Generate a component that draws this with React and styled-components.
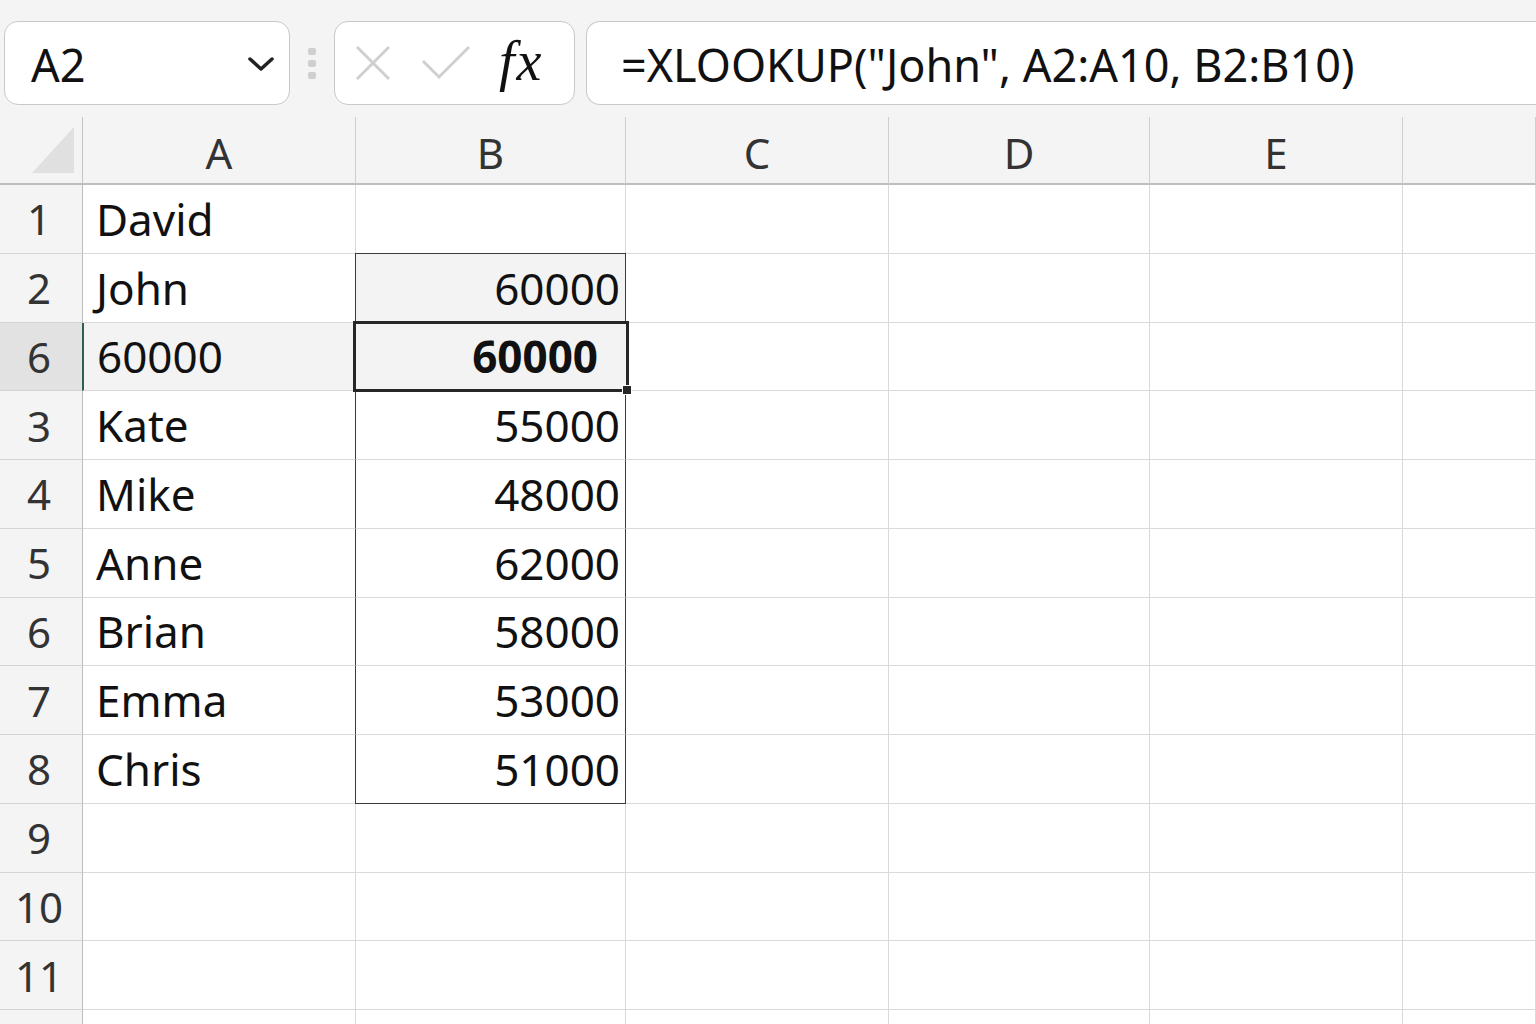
import React from 'react'
import styled, { createGlobalStyle, css } from 'styled-components'

const GlobalStyle = createGlobalStyle`
  html, body {
    margin: 0;
    padding: 0;
    background: #ffffff;
    overflow: hidden;
  }
  body {
    font-family: "Noto Sans", "Open Sans", sans-serif;
    color: #111;
  }
`

const Page = styled.div`
  width: 1536px;
  height: 1024px;
  overflow: hidden;
  display: flex;
  flex-direction: column;
`

const Toolbar = styled.div`
  height: 117px;
  flex: none;
  background: #f4f4f4;
  display: flex;
  align-items: flex-start;
  padding: 21px 0 0 4px;
  box-sizing: border-box;
`

const NameBox = styled.div`
  width: 286px;
  height: 84px;
  box-sizing: border-box;
  background: #fff;
  border: 1px solid #c9c9c9;
  border-radius: 14px;
  display: flex;
  align-items: center;
  justify-content: space-between;
  padding: 2px 14px 0 26px;
  font-size: 45px;
  color: #111;
`

const Grip = styled.div`
  width: 44px;
  height: 84px;
  display: flex;
  flex-direction: column;
  align-items: center;
  justify-content: center;
  gap: 5px;
  span {
    width: 8px;
    height: 7px;
    border-radius: 2px;
    background: #cfcfcf;
  }
`

const FxBox = styled.div`
  width: 241px;
  height: 84px;
  box-sizing: border-box;
  background: #fff;
  border: 1px solid #c9c9c9;
  border-radius: 14px;
  display: flex;
  align-items: center;
  padding: 0 0 0 18px;
  gap: 28px;
`

const FxLabel = styled.span`
  font-family: "Liberation Serif", "DejaVu Serif", serif;
  font-style: italic;
  font-size: 56px;
  color: #111;
  margin-left: 0;
  letter-spacing: 2px;
  line-height: 1;
  padding-bottom: 4px;
`

const FormulaBar = styled.div`
  flex: 1;
  margin-left: 11px;
  height: 84px;
  box-sizing: border-box;
  background: #fff;
  border: 1px solid #c9c9c9;
  border-right: none;
  border-radius: 14px 0 0 14px;
  display: flex;
  align-items: center;
  padding: 2px 0 0 34px;
  font-size: 45px;
  color: #111;
  white-space: nowrap;
`

const Sheet = styled.div`
  display: grid;
  grid-template-columns: 83px 273px 270px 263px 261px 253px 1fr;
  grid-template-rows: 68px repeat(13, 68.75px);
  flex: none;
`

const Corner = styled.div`
  background: #f4f4f4;
  border-right: 1px solid #c4c4c4;
  border-bottom: 2px solid #bdbdbd;
  box-sizing: border-box;
  display: flex;
  align-items: flex-end;
  justify-content: flex-end;
  padding: 0 8px 10px 0;
`

const ColHead = styled.div`
  background: #f4f4f4;
  border-right: 1px solid #cfcfcf;
  border-bottom: 2px solid #bdbdbd;
  box-sizing: border-box;
  display: flex;
  align-items: center;
  justify-content: center;
  font-size: 42px;
  color: #333;
  padding-top: 4px;
`

const RowHead = styled.div`
  background: ${(p) => (p.active ? '#e2e2e2' : '#f4f4f4')};
  border-right: 1px solid #bdbdbd;
  border-bottom: 1px solid #d4d4d4;
  box-sizing: border-box;
  display: flex;
  align-items: center;
  justify-content: center;
  font-size: 42px;
  color: #333;
  padding-right: 4px;
`

const Cell = styled.div`
  position: relative;
  box-sizing: border-box;
  border-right: 1px solid #dadada;
  border-bottom: 1px solid #dadada;
  display: flex;
  align-items: center;
  font-size: 44px;
  color: #111;
  white-space: nowrap;
  padding: 0 0 0 13px;
  background: ${(p) => (p.shaded ? '#f3f3f3' : '#fff')};
  ${(p) =>
    p.num &&
    css`
      justify-content: flex-end;
      padding: 0 5px 0 0;
    `}
  ${(p) =>
    p.marked &&
    css`
      border-left: 2px solid #2f5f52;
      margin-left: -1px;
    `}
  ${(p) =>
    p.inRange &&
    css`
      border-left: 1px solid #3a3a3a;
      border-right: 1px solid #3a3a3a;
      margin-left: -1px;
    `}
  ${(p) =>
    p.rangeTop &&
    css`
      border-top: 1px solid #3a3a3a;
      margin-top: -1px;
    `}
  ${(p) =>
    p.rangeBottom &&
    css`
      border-bottom: 1px solid #3a3a3a;
    `}
  ${(p) =>
    p.active &&
    css`
      border: 3px solid #262626;
      margin: -2px -3px -1px -3px;
      font-weight: 700;
      padding-right: 28px;
      z-index: 2;
    `}
`

const FillHandle = styled.span`
  position: absolute;
  right: -6px;
  bottom: -6px;
  width: 8px;
  height: 8px;
  background: #262626;
  border: 1px solid #fff;
`

const XIcon = () => (
  <svg width="40" height="40" viewBox="0 0 40 40">
    <path d="M4 4 L36 36 M36 4 L4 36" stroke="#cfcfcf" strokeWidth="3" fill="none" />
  </svg>
)

const CheckIcon = () => (
  <svg width="50" height="36" viewBox="0 0 50 36">
    <path d="M2 16 L18 32 L48 2" stroke="#cfcfcf" strokeWidth="3" fill="none" />
  </svg>
)

const Chevron = () => (
  <svg width="28" height="18" viewBox="0 0 28 18">
    <path d="M3 4 L14 14 L25 4" stroke="#222" strokeWidth="3.5" fill="none" strokeLinecap="round" strokeLinejoin="round" />
  </svg>
)

const CornerMark = () => (
  <svg width="42" height="46" viewBox="0 0 42 46">
    <path d="M42 0 L42 46 L0 46 Z" fill="#e0e0e0" />
  </svg>
)

const cols = ['A', 'B', 'C', 'D', 'E', '']

const rows = [
  { n: '1', a: 'David', b: '' },
  { n: '2', a: 'John', b: '60000' },
  { n: '6', a: '60000', b: '60000', current: true },
  { n: '3', a: 'Kate', b: '55000' },
  { n: '4', a: 'Mike', b: '48000' },
  { n: '5', a: 'Anne', b: '62000' },
  { n: '6', a: 'Brian', b: '58000' },
  { n: '7', a: 'Emma', b: '53000' },
  { n: '8', a: 'Chris', b: '51000' },
  { n: '9', a: '', b: '' },
  { n: '10', a: '', b: '' },
  { n: '11', a: '', b: '' },
  { n: '', a: '', b: '' },
]

export default function App() {
  return (
    <>
      <GlobalStyle />
      <Page>
        <Toolbar>
          <NameBox>
            A2
            <Chevron />
          </NameBox>
          <Grip>
            <span />
            <span />
            <span />
          </Grip>
          <FxBox>
            <XIcon />
            <CheckIcon />
            <FxLabel>fx</FxLabel>
          </FxBox>
          <FormulaBar>=XLOOKUP("John", A2:A10, B2:B10)</FormulaBar>
        </Toolbar>

        <Sheet>
          <Corner>
            <CornerMark />
          </Corner>
          {cols.map((c, i) => (
            <ColHead key={i}>{c}</ColHead>
          ))}

          {rows.map((r, i) => {
            const inRange = i >= 1 && i <= 8
            return (
              <React.Fragment key={i}>
                <RowHead active={r.current}>{r.n}</RowHead>
                <Cell shaded={r.current} marked={r.current}>
                  {r.a}
                </Cell>
                <Cell
                  num
                  shaded={i === 1 || r.current}
                  active={r.current}
                  inRange={inRange && !r.current}
                  rangeTop={i === 1}
                  rangeBottom={i === 8}
                >
                  {r.b}
                  {r.current && <FillHandle />}
                </Cell>
                <Cell />
                <Cell />
                <Cell />
                <Cell />
              </React.Fragment>
            )
          })}
        </Sheet>
      </Page>
    </>
  )
}
